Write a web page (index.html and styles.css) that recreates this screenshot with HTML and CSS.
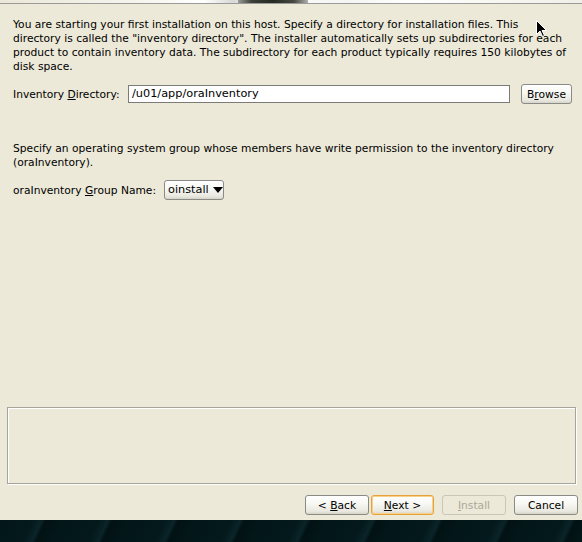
FILE: index.html
```html
<!DOCTYPE html>
<html>
<head>
<meta charset="utf-8">
<link rel="stylesheet" href="styles.css">
</head>
<body>
<div class="screen">
  <div class="window">
    <div class="banner"><div class="banner-art"></div></div>
    <div class="content">
      <p class="intro">You are starting your first installation on this host. Specify a directory for installation files. This<br>directory is called the "inventory directory". The installer automatically sets up subdirectories for each<br>product to contain inventory data. The subdirectory for each product typically requires 150 kilobytes of<br>disk space.</p>
      <div class="dir-row">
        <span class="label">Inventory <u>D</u>irectory:</span>
        <div class="field">/u01/app/oraInventory</div>
        <button class="btn browse">B<u>r</u>owse</button>
      </div>
      <p class="group-text">Specify an operating system group whose members have write permission to the inventory directory<br>(oraInventory).</p>
      <div class="group-row">
        <span class="label">oraInventory <u>G</u>roup Name:</span>
        <div class="combo">oinstall <span class="arrow"></span></div>
      </div>
    </div>
    <div class="messages"></div>
    <div class="actions">
      <button class="btn nav back">&lt; <u>B</u>ack</button>
      <button class="btn nav default"><u>N</u>ext &gt;</button>
      <button class="btn nav disabled"><u>I</u>nstall</button>
      <button class="btn nav cancel">Cancel</button>
    </div>
    <svg class="cursor" width="12" height="18" viewBox="0 0 12 18"><path d="M0.5 0.5 L0.5 14.5 L4 11 L6.5 16.5 L8.5 15.5 L6 10.5 L10.5 10.5 Z" fill="#000" stroke="#fff" stroke-width="1"/></svg>
  </div>
  <div class="desktop"></div>
</div>
</body>
</html>
```
FILE: styles.css
```css
html, body {
  margin: 0;
  padding: 0;
  background: #ece9d8;
}
body {
  font-family: "DejaVu Sans", "Liberation Sans", sans-serif;
  font-size: 10.7px;
  color: #000;
}
.screen {
  width: 582px;
  height: 542px;
  display: flex;
  flex-direction: column;
  overflow: hidden;
}
.window {
  position: relative;
  height: 520px;
  display: flex;
  flex-direction: column;
  background: #ece9d8;
}
.banner {
  height: 3px;
  border-bottom: 1px solid #9a9a96;
  background: linear-gradient(to right, #ebe8da 0%, #f6f5ef 25%, #ffffff 35%, #d8d8d8 40%, #ffffff 44%, #f4f4f4 60%, #ffffff 70%, #f0efe8 100%);
  position: relative;
}
.banner-art {
  position: absolute;
  left: 238px;
  top: 0;
  width: 70px;
  height: 3px;
  background: linear-gradient(to right, #9a9a9a, #3a3f38 20%, #262a24 50%, #474a44 80%, #b0b0b0);
}
.content {
  padding: 0 10px 0 13px;
}
.intro {
  margin: 14px 0 0 0;
  line-height: 14px;
  white-space: nowrap;
}
.dir-row {
  display: flex;
  align-items: center;
  margin-top: 10px;
  height: 20px;
}
.dir-row .label {
  width: 115px;
}
.field {
  box-sizing: border-box;
  width: 382px;
  height: 18px;
  border: 1px solid #7b7b78;
  background: #fff;
  padding: 0 3px;
  font-size: 11.3px;
  line-height: 16px;
}
.btn {
  box-sizing: border-box;
  font-family: "DejaVu Sans", "Liberation Sans", sans-serif;
  font-size: 10.7px;
  color: #000;
  height: 20px;
  border: 1px solid #8a8a86;
  border-radius: 3px;
  background: linear-gradient(to bottom, #ffffff 0%, #f7f7f3 45%, #e9e8e0 85%, #d6d4c8 100%);
  padding: 0;
  margin: 0;
}
.browse {
  width: 51px;
  margin-left: 11px;
}
.group-text {
  margin: 38px 0 0 0;
  line-height: 14px;
  white-space: nowrap;
}
.group-row {
  display: flex;
  align-items: center;
  margin-top: 10px;
  height: 20px;
}
.group-row .label {
  width: 151px;
}
.combo {
  box-sizing: border-box;
  width: 60px;
  height: 20px;
  border: 1px solid #8a8a86;
  border-radius: 3px;
  background: linear-gradient(to bottom, #ffffff 0%, #f7f7f3 45%, #e9e8e0 85%, #d6d4c8 100%);
  font-size: 11.3px;
  line-height: 18px;
  padding-left: 3px;
  display: flex;
  align-items: center;
  gap: 4px;
}
.arrow {
  width: 0;
  height: 0;
  border-left: 5px solid transparent;
  border-right: 5px solid transparent;
  border-top: 6px solid #000;
}
.messages {
  margin: auto 6px 0 7px;
  height: 75px;
  border: 1px solid #a5a59e;
  box-shadow: inset 1px 1px 0 #fff, 1px 1px 0 #fff;
}
.actions {
  display: flex;
  justify-content: flex-end;
  padding: 11px 4px 5px 0;
}
.nav {
  width: 64px;
}
.default {
  width: 63px;
  margin-left: 2px;
  border: 1px solid #e8a23c;
  box-shadow: inset 0 0 0 1px #f8d088;
}
.disabled {
  margin-left: 8px;
  color: #aca899;
  border-color: #c9c6b8;
  background: #ece9d8;
}
.cancel {
  margin-left: 8px;
}
.cursor {
  position: absolute;
  left: 536px;
  top: 20px;
}
.desktop {
  height: 22px;
  background: repeating-linear-gradient(115deg, #03171a 0px, #04191c 30px, #0a2428 38px, #021214 42px, #03171a 60px);
}
```
